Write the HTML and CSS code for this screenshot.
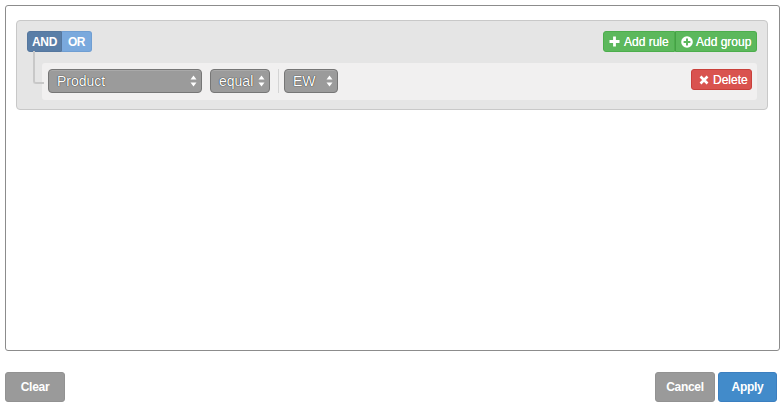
FILE: index.html
```html
<!DOCTYPE html>
<html>
<head>
<meta charset="utf-8">
<link rel="stylesheet" href="styles.css">
</head>
<body>
<div class="builder">
  <div class="group">
    <div class="group-header">
      <div class="conditions">
        <button class="cond active">AND</button><button class="cond">OR</button>
      </div>
      <div class="actions">
        <button class="btn-green"><svg width="11" height="11" viewBox="0 0 11 11"><path d="M5.5 0.5v10M0.5 5.5h10" stroke="#fff" stroke-width="2.8"/></svg>Add rule</button><button class="btn-green"><svg width="12" height="12" viewBox="0 0 12 12"><circle cx="6" cy="6" r="5.8" fill="#fff"/><path d="M6 2.6v6.8M2.6 6h6.8" stroke="#5cb85c" stroke-width="2"/></svg>Add group</button>
      </div>
    </div>
    <div class="rules">
      <div class="rule">
        <div class="select sel-product"><span>Product</span><svg class="arrows" width="7" height="12" viewBox="0 0 7 12"><path d="M3.5 0.5L6.5 4.5H0.5Z M3.5 11.5L6.5 7.5H0.5Z" fill="#fff"/></svg></div>
        <div class="select sel-op"><span>equal</span><svg class="arrows" width="7" height="12" viewBox="0 0 7 12"><path d="M3.5 0.5L6.5 4.5H0.5Z M3.5 11.5L6.5 7.5H0.5Z" fill="#fff"/></svg></div>
        <div class="sep"></div>
        <div class="select sel-val"><span>EW</span><svg class="arrows" width="7" height="12" viewBox="0 0 7 12"><path d="M3.5 0.5L6.5 4.5H0.5Z M3.5 11.5L6.5 7.5H0.5Z" fill="#fff"/></svg></div>
        <div class="spacer"></div>
        <button class="btn-red"><svg width="10" height="10" viewBox="0 0 10 10"><path d="M1.5 1.5l7 7M8.5 1.5l-7 7" stroke="#fff" stroke-width="2.6"/></svg>Delete</button>
      </div>
    </div>
  </div>
</div>
<div class="footer">
  <button class="fbtn grey">Clear</button>
  <div class="right">
    <button class="fbtn grey">Cancel</button>
    <button class="fbtn blue">Apply</button>
  </div>
</div>
</body>
</html>
```
FILE: styles.css
```css
* { box-sizing: border-box; }
html, body { margin: 0; padding: 0; background: #fff; }
body {
  font-family: "Liberation Sans", Arial, sans-serif;
  width: 784px;
  height: 411px;
  overflow: hidden;
}
button {
  font-family: inherit;
  cursor: pointer;
  margin: 0;
  white-space: nowrap;
}
svg { flex: none; }
.builder {
  margin: 5px 4px 0 5px;
  height: 346px;
  border: 1px solid #8c8c8c;
  border-radius: 3px;
  padding: 14px 11px 0 10px;
}
.group {
  background: #e5e5e5;
  border: 1px solid #c8c8c8;
  border-radius: 4px;
  padding: 10px 10px 9px 10px;
}
.group-header {
  display: flex;
  justify-content: space-between;
  align-items: center;
  height: 21px;
}
.conditions { display: flex; height: 21px; }
.cond {
  border: none;
  height: 21px;
  padding: 0;
  color: #fff;
  font-size: 12px;
  font-weight: bold;
  letter-spacing: -0.4px;
  background: #7aa9dd;
}
.cond:first-child { width: 35px; border-radius: 3px 0 0 3px; background: #5a7ea7; border: 1px solid #55779e; }
.cond:last-child { width: 30px; border-radius: 0 3px 3px 0; border: 1px solid #6f9ed2; border-left: none; }
.actions { display: flex; height: 21px; }
.btn-green {
  display: flex;
  align-items: center;
  gap: 4px;
  height: 21px;
  border: 1px solid #4cae4c;
  background: #5cb85c;
  color: #fff;
  font-size: 12px;
  padding: 0 5px;
  text-shadow: 0 0 0.6px #fff;
}
.btn-green:first-child { width: 72px; border-radius: 3px 0 0 3px; padding-left: 5px; }
.btn-green:last-child { width: 82px; border-radius: 0 3px 3px 0; border-left: 1px solid #45a045; padding-left: 5px; gap: 3px; }
.rules { padding: 11px 0 0 15px; }
.rule {
  position: relative;
  display: flex;
  align-items: flex-start;
  height: 37px;
  background: #f1f0f0;
  border-radius: 3px;
  padding: 6px 5px 0 6px;
}
.rule::before {
  content: "";
  position: absolute;
  left: -9px;
  top: -12px;
  width: 9px;
  height: 31px;
  border-left: 2px solid #c8c8c8;
  border-bottom: 2px solid #c8c8c8;
  border-bottom-left-radius: 3px;
}
.select {
  display: flex;
  align-items: center;
  justify-content: space-between;
  height: 24px;
  background: #9b9b9b;
  border: 1px solid #767676;
  border-radius: 4px;
  color: #fff;
  font-size: 14px;
  padding: 0 4px 0 8px;
  text-shadow: 0 0 1px rgba(0,0,0,0.8), 0 0 1px rgba(0,0,0,0.5);
  box-shadow: inset 0 1px 0 rgba(255,255,255,0.15);
}
.sel-product { width: 154px; }
.sel-op { width: 60px; margin-left: 8px; padding-left: 8px; gap: 2px; }
.sel-val { width: 54px; padding-left: 8px; }
.sep {
  width: 1px;
  height: 24px;
  background: #d4d4d4;
  margin: 0 5px 0 8px;
}
.spacer { flex: 1; }
.btn-red {
  display: flex;
  align-items: center;
  gap: 4px;
  width: 61px;
  height: 21px;
  border: 1px solid #c9403b;
  border-radius: 3px;
  background: #d9534f;
  color: #fff;
  font-size: 12px;
  padding: 0 6px 0 7px;
  text-shadow: 0 0 0.6px #fff;
}
.footer {
  display: flex;
  justify-content: space-between;
  margin: 21px 7px 0 5px;
}
.right { display: flex; gap: 3px; }
.fbtn {
  height: 30px;
  border: 1px solid transparent;
  border-radius: 3px;
  color: #fff;
  font-size: 12px;
  font-weight: bold;
  letter-spacing: -0.3px;
  padding: 0;
  width: 60px;
}
.grey { background: #9a9a9a; border-color: #929292; }
.blue { background: #428bca; border-color: #3b7fc0; width: 59px; }
```
